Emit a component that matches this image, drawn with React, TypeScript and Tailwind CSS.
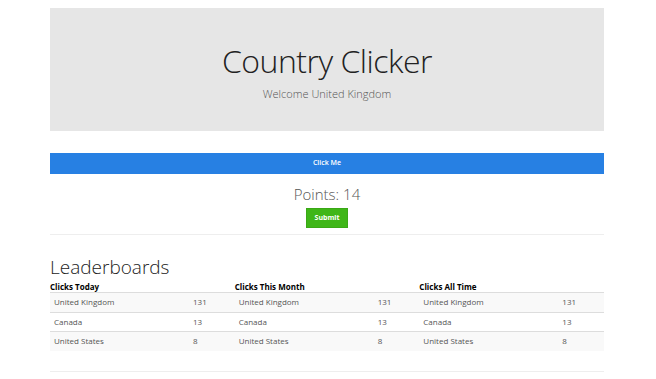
const rows = [
  { name: 'United Kingdom', count: 131 },
  { name: 'Canada', count: 13 },
  { name: 'United States', count: 8 },
];

const boards = ['Clicks Today', 'Clicks This Month', 'Clicks All Time'];

function Board({ title }: { title: string }) {
  return (
    <div>
      <div className="h-[10px] text-[8px] leading-[10px] font-bold text-black">{title}</div>
      <div>
        {rows.map((r, i) => (
          <div
            key={r.name}
            className={`grid grid-cols-[139px_1fr] h-[19.5px] items-center px-1 border-t border-[#dddddd] text-[8px] text-[#555555] ${
              i % 2 === 0 ? 'bg-[#f9f9f9]' : 'bg-white'
            }`}
          >
            <span>{r.name}</span>
            <span>{r.count}</span>
          </div>
        ))}
      </div>
    </div>
  );
}

export default function App() {
  return (
    <div className="min-h-[379px] bg-white font-['Open_Sans',sans-serif]">
      <div className="w-[554px] ml-[50px] pt-[8px]">
        {/* Jumbotron */}
        <div className="h-[123px] bg-[#e6e6e6] flex flex-col items-center pt-[35px]">
          <h1 className="text-[32px] leading-[36px] font-light text-[#222222] tracking-[-0.5px]">Country Clicker</h1>
          <p className="mt-[8px] text-[11px] leading-[14px] font-light text-[#555555]">Welcome United Kingdom</p>
        </div>

        <button className="mt-[22px] w-full h-[21px] bg-[#2780e3] text-white text-[7px] font-semibold flex items-center justify-center">
          Click Me
        </button>

        <div className="flex flex-col items-center">
          <div className="mt-[9px] h-[22px] text-[15px] leading-[22px] font-light text-[#555555]">Points: 14</div>
          <button className="mt-[3px] w-[42px] h-[20px] bg-[#3fb618] border border-[#3aa816] text-white text-[7px] font-bold flex items-center justify-center">
            Submit
          </button>
        </div>

        <div className="mt-[6px] border-t border-[#eeeeee]" />

        <h2 className="mt-[21px] h-[22px] text-[19px] leading-[22px] font-light text-[#222222]">Leaderboards</h2>

        <div className="mt-[4px] grid grid-cols-3">
          {boards.map((b) => (
            <Board key={b} title={b} />
          ))}
        </div>

        <div className="mt-[20px] border-t border-[#eeeeee]" />
      </div>
    </div>
  );
}
